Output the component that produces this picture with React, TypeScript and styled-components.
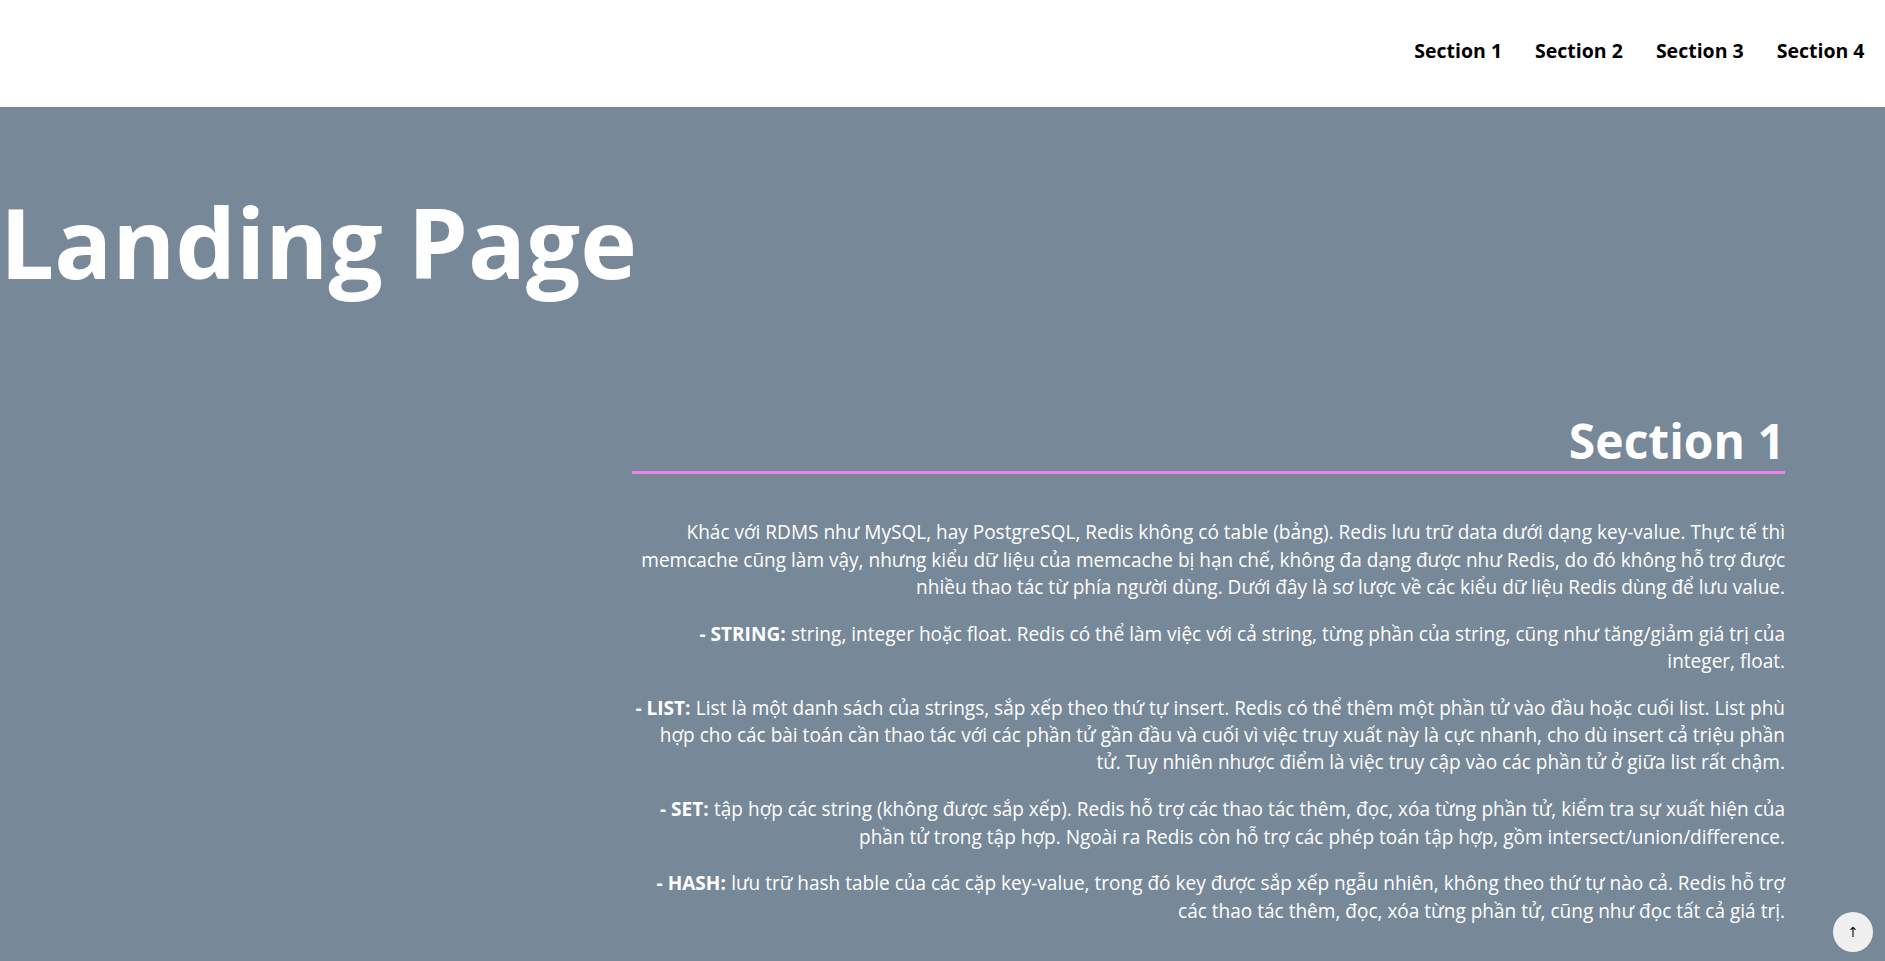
import React from "react";
import styled, { createGlobalStyle } from "styled-components";

const GlobalStyle = createGlobalStyle`
  html, body {
    margin: 0;
    padding: 0;
    background: #778899;
    font-family: "Open Sans", "Noto Sans", sans-serif;
  }
  * { box-sizing: border-box; }
`;

const Header = styled.header`
  height: 107px;
  background: #ffffff;
  display: flex;
  justify-content: flex-end;
  align-items: center;
  padding: 0 4px 6px 0;
`;

const Nav = styled.nav`
  display: flex;
`;

const NavLink = styled.a`
  padding: 0 16.5px;
  font-size: 19.5px;
  font-weight: 700;
  color: #000;
  text-decoration: none;
  cursor: pointer;
`;

const Main = styled.main`
  background: #778899;
  color: #fff;
  padding-bottom: 40px;
`;

const Title = styled.h1`
  margin: 0;
  padding: 68px 0 0 0;
  font-size: 96px;
  font-weight: 700;
  line-height: 1.4;
  color: #fff;
`;

const Section = styled.section`
  margin: 102px 100px 0 632px;
  text-align: right;
`;

const SectionTitle = styled.h2`
  margin: 0;
  font-size: 48px;
  font-weight: 700;
  line-height: 1.25;
  padding-bottom: 0;
  border-bottom: 3px solid #ee82ee;
`;

const Body = styled.div`
  padding-top: 45px;
`;

const Para = styled.p`
  margin: 0 0 19.5px 0;
  font-size: 19.05px;
  line-height: 27.3px;
`;

const Label = styled.strong`
  font-weight: 700;
  margin-right: 0.28em;
`;

const ToTop = styled.button`
  position: fixed;
  right: 12px;
  bottom: 9px;
  width: 40px;
  height: 40px;
  border-radius: 50%;
  border: none;
  background: #f0f0f0;
  color: #1a1a1a;
  font-family: "DejaVu Sans", sans-serif;
  font-size: 14px;
  display: flex;
  align-items: center;
  justify-content: center;
  padding: 0;
  cursor: pointer;
`;

const paragraphs: { label?: string; text: string }[] = [
  {
    text: "Khác với RDMS như MySQL, hay PostgreSQL, Redis không có table (bảng). Redis lưu trữ data dưới dạng key-value. Thực tế thì memcache cũng làm vậy, nhưng kiểu dữ liệu của memcache bị hạn chế, không đa dạng được như Redis, do đó không hỗ trợ được nhiều thao tác từ phía người dùng. Dưới đây là sơ lược về các kiểu dữ liệu Redis dùng để lưu value.",
  },
  {
    label: "- STRING:",
    text: "string, integer hoặc float. Redis có thể làm việc với cả string, từng phần của string, cũng như tăng/giảm giá trị của integer, float.",
  },
  {
    label: "- LIST:",
    text: "List là một danh sách của strings, sắp xếp theo thứ tự insert. Redis có thể thêm một phần tử vào đầu hoặc cuối list. List phù hợp cho các bài toán cần thao tác với các phần tử gần đầu và cuối vì việc truy xuất này là cực nhanh, cho dù insert cả triệu phần tử. Tuy nhiên nhược điểm là việc truy cập vào các phần tử ở giữa list rất chậm.",
  },
  {
    label: "- SET:",
    text: "tập hợp các string (không được sắp xếp). Redis hỗ trợ các thao tác thêm, đọc, xóa từng phần tử, kiểm tra sự xuất hiện của phần tử trong tập hợp. Ngoài ra Redis còn hỗ trợ các phép toán tập hợp, gồm intersect/union/difference.",
  },
  {
    label: "- HASH:",
    text: "lưu trữ hash table của các cặp key-value, trong đó key được sắp xếp ngẫu nhiên, không theo thứ tự nào cả. Redis hỗ trợ các thao tác thêm, đọc, xóa từng phần tử, cũng như đọc tất cả giá trị.",
  },
];

export default function App() {
  return (
    <>
      <GlobalStyle />
      <Header>
        <Nav>
          {["Section 1", "Section 2", "Section 3", "Section 4"].map((s) => (
            <NavLink key={s}>{s}</NavLink>
          ))}
        </Nav>
      </Header>
      <Main>
        <Title>Landing Page</Title>
        <Section>
          <SectionTitle>Section 1</SectionTitle>
          <Body>
            {paragraphs.map((p, i) => (
              <Para key={i}>
                {p.label && <Label>{p.label}</Label>}
                {p.text}
              </Para>
            ))}
          </Body>
        </Section>
      </Main>
      <ToTop aria-label="Back to top">↑</ToTop>
    </>
  );
}
